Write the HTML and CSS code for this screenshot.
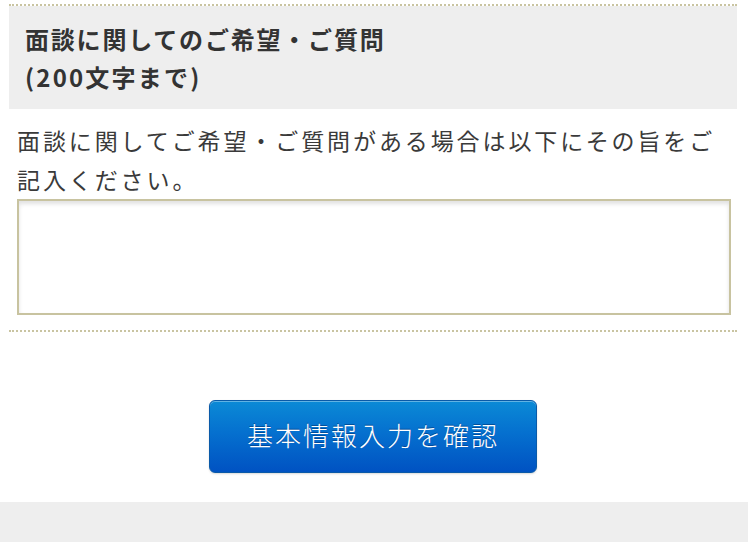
FILE: index.html
```html
<!DOCTYPE html>
<html lang="ja">
<head>
<meta charset="utf-8">
<title>面談に関してのご希望・ご質問</title>
<link rel="stylesheet" href="styles.css">
</head>
<body>
<div class="page">
  <section class="field">
    <h2 class="field-title">面談に関してのご希望・ご質問<br><span class="limit">(200文字まで)</span></h2>
    <div class="field-body">
      <p class="field-note">面談に関してご希望・ご質問がある場合は以下にその旨をご記入ください。</p>
      <textarea class="field-input" maxlength="200"></textarea>
    </div>
  </section>
  <div class="actions">
    <button type="button" class="confirm-btn">基本情報入力を確認</button>
  </div>
</div>
<footer class="footer"></footer>
</body>
</html>
```
FILE: styles.css
```css
html, body {
  margin: 0;
  padding: 0;
  background: #ffffff;
}
body {
  font-family: "Noto Sans CJK JP", "Noto Sans", sans-serif;
  color: #333333;
}
.page {
  padding: 4px 11px 0 9px;
}
.field {
  border-top: 2px dotted #c9c4a1;
  border-bottom: 2px dotted #c9c4a1;
}
.field-title {
  margin: 0;
  background: #eeeeee;
  padding: 14px 16px 13px;
  font-size: 24px;
  line-height: 38px;
  font-weight: bold;
  letter-spacing: 1.8px;
  color: #333333;
}
.limit {
  letter-spacing: 2.2px;
}
.field-body {
  padding: 12px 6px 15px 8px;
}
.field-note {
  margin: 0;
  font-size: 23px;
  line-height: 39px;
  letter-spacing: 2.9px;
  color: #3a3a3a;
  font-weight: 400;
}
.field-input {
  display: block;
  box-sizing: border-box;
  width: 100%;
  height: 116px;
  margin: 0;
  border: 2px solid #c8c3a0;
  border-radius: 0;
  background: #ffffff;
  box-shadow: inset 0 3px 4px rgba(0, 0, 0, 0.12);
  resize: none;
  outline: none;
  font: inherit;
}
.actions {
  display: flex;
  justify-content: center;
  padding: 68px 0 29px;
}
.confirm-btn {
  width: 328px;
  height: 73px;
  border: 1px solid #0a5aa8;
  border-radius: 6px;
  background: linear-gradient(to bottom, #0b8ad6 0%, #0570cf 45%, #0052c2 100%);
  box-shadow: inset 0 1px 0 rgba(255, 255, 255, 0.35), 0 1px 2px rgba(0, 0, 0, 0.15);
  color: #ffffff;
  font-family: "Noto Sans CJK JP", "Noto Sans", sans-serif;
  font-size: 26px;
  font-weight: 300;
  letter-spacing: 2px;
  text-shadow: 0 -1px 0 rgba(0, 40, 100, 0.5);
  padding: 0 0 4px;
  cursor: pointer;
}
.footer {
  height: 41px;
  background: #eeeeee;
}
```
